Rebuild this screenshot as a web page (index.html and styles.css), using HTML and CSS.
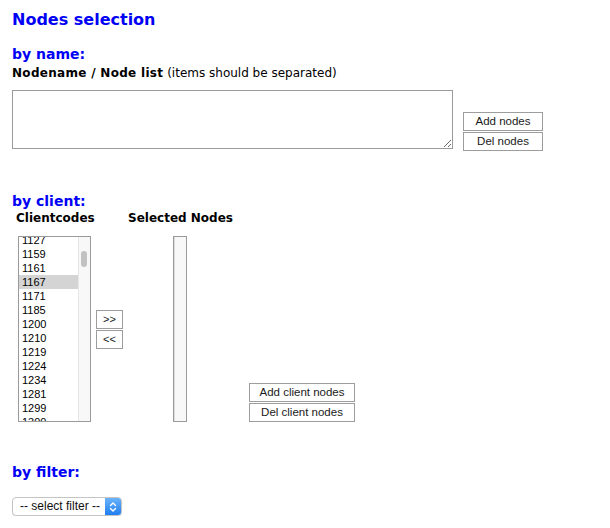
FILE: index.html
```html
<!DOCTYPE html>
<html>
<head>
<meta charset="utf-8">
<title>Nodes selection</title>
<link rel="stylesheet" href="styles.css">
</head>
<body>
<h1 class="title">Nodes selection</h1>

<h2 class="section">by name:</h2>
<p class="label"><b>Nodename / Node list</b> (items should be separated)</p>
<div class="name-row">
  <textarea class="nodes-text"></textarea>
  <div class="btn-stack">
    <button class="btn btn-name">Add nodes</button>
    <button class="btn btn-name">Del nodes</button>
  </div>
</div>

<h2 class="section section-client">by client:</h2>
<div class="client-head">
  <span class="col-head">Clientcodes</span>
  <span class="col-head">Selected Nodes</span>
</div>
<div class="client-row">
  <div class="listbox codes">
    <ul class="items">
      <li>1127</li>
      <li>1159</li>
      <li>1161</li>
      <li class="sel">1167</li>
      <li>1171</li>
      <li>1185</li>
      <li>1200</li>
      <li>1210</li>
      <li>1219</li>
      <li>1224</li>
      <li>1234</li>
      <li>1281</li>
      <li>1299</li>
      <li>1300</li>
    </ul>
    <div class="track"><div class="thumb"></div></div>
  </div>
  <div class="btn-stack move">
    <button class="btn btn-move">&gt;&gt;</button>
    <button class="btn btn-move">&lt;&lt;</button>
  </div>
  <div class="listbox selected">
    <div class="track full"></div>
  </div>
  <div class="btn-stack client-btns">
    <button class="btn btn-client">Add client nodes</button>
    <button class="btn btn-client">Del client nodes</button>
  </div>
</div>

<h2 class="section section-filter">by filter:</h2>
<div class="filter">
  <span class="filter-text">-- select filter --</span>
  <span class="filter-arrow">
    <svg width="8" height="12" viewBox="0 0 8 12"><path d="M1.5 4.5 L4 2 L6.5 4.5 M1.5 7.5 L4 10 L6.5 7.5" fill="none" stroke="#fff" stroke-width="1.4" stroke-linecap="round" stroke-linejoin="round"/></svg>
  </span>
</div>
</body>
</html>
```
FILE: styles.css
```css
html, body {
  margin: 0;
  padding: 0;
  background: #fff;
}
body {
  padding: 0 12px;
  font-family: "DejaVu Sans", Verdana, sans-serif;
  color: #000;
}
.title {
  margin: 10px 0 0;
  font-size: 16px;
  line-height: 20px;
  font-weight: bold;
  color: #0000f5;
}
.section {
  margin: 15px 0 0;
  font-size: 14px;
  line-height: 18px;
  font-weight: bold;
  color: #0000f5;
}
.label {
  margin: 3px 0 0;
  font-size: 12px;
  line-height: 15px;
}
.label b {
  letter-spacing: 0.3px;
}
.name-row {
  display: flex;
  align-items: flex-end;
  margin-top: 9px;
  gap: 10px;
}
.nodes-text {
  box-sizing: border-box;
  width: 441px;
  height: 59px;
  margin: 0 0 2px;
  border: 1px solid #9a9a9a;
  padding: 2px;
  font-family: "Liberation Sans", Arial, sans-serif;
  font-size: 12px;
}
.btn-stack {
  display: flex;
  flex-direction: column;
  gap: 1px;
}
.btn {
  box-sizing: border-box;
  height: 19px;
  padding: 0;
  margin: 0;
  background: #fff;
  border: 1px solid #9d9d9d;
  border-radius: 0;
  font-family: "Liberation Sans", Arial, sans-serif;
  font-size: 11.5px;
  line-height: 17px;
  color: #1a1a1a;
}
.btn-name { width: 80px; }
.section-client { margin-top: 41px; }
.client-head {
  display: grid;
  grid-template-columns: 112px auto;
  padding-left: 4px;
  margin-top: 1px;
  font-size: 12px;
  line-height: 15px;
  font-weight: bold;
}
.client-row {
  display: flex;
  align-items: center;
  margin-top: 10px;
  padding-left: 6px;
}
.listbox {
  box-sizing: border-box;
  height: 186px;
  border: 1px solid #9a9a9a;
  display: flex;
  overflow: hidden;
  background: #fff;
}
.codes { width: 73px; }
.items {
  list-style: none;
  margin: -4px 0 0;
  padding: 0;
  width: 59px;
  font-family: "Liberation Sans", Arial, sans-serif;
  font-size: 11px;
  line-height: 14px;
}
.items li {
  height: 14px;
  padding-left: 3px;
}
.items li.sel {
  background: #d4d4d4;
}
.track {
  box-sizing: border-box;
  width: 12px;
  background: #f8f8f8;
  border-left: 1px solid #e6e6e6;
  padding: 14px 0 0 2px;
}
.thumb {
  width: 6px;
  height: 16px;
  border-radius: 3px;
  background: #c2c2c2;
}
.move {
  margin-left: 5px;
}
.btn-move {
  width: 27px;
  font-size: 11px;
}
.selected {
  width: 14px;
  margin-left: 50px;
}
.track.full {
  width: 12px;
  border-left: 1px solid #dcdcdc;
}
.client-btns {
  align-self: flex-end;
  margin-left: 62px;
}
.btn-client { width: 106px; }
.section-filter { margin-top: 41px; }
.filter {
  display: inline-flex;
  box-sizing: border-box;
  margin-top: 16px;
  width: 110px;
  height: 19px;
  border: 1px solid #c4c4c4;
  border-radius: 4px;
  overflow: hidden;
  background: #fff;
  box-shadow: 0 1px 1px rgba(0,0,0,0.08);
}
.filter-text {
  flex: 1;
  padding-left: 7px;
  font-family: "Liberation Sans", Arial, sans-serif;
  font-size: 12px;
  line-height: 17px;
  color: #111;
}
.filter-arrow {
  width: 16px;
  display: flex;
  align-items: center;
  justify-content: center;
  background: linear-gradient(#6cb3fa, #1f7ef1);
}
```
